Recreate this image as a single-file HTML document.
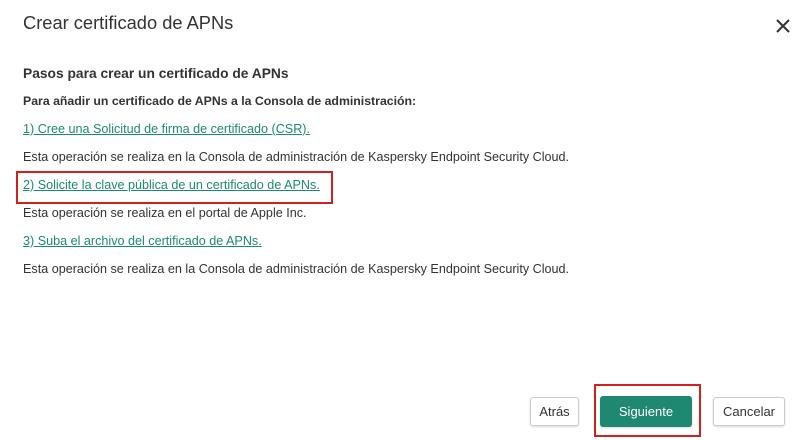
<!DOCTYPE html>
<html><head><meta charset="utf-8"><style>
body{margin:0;width:805px;height:440px;background:#fff;font-family:"Liberation Sans",sans-serif;color:#333;position:relative;overflow:hidden}
.a{position:absolute;white-space:nowrap}
.t{font-size:12.6px;line-height:16px}
.l{color:#1d8a72;text-decoration:underline}
.btn{position:absolute;box-sizing:border-box;border:1px solid #ccc;border-radius:3px;background:#fff;font-size:13px;text-align:center;line-height:27px;box-shadow:0 1px 2px rgba(0,0,0,.15)}
.red{position:absolute;border:2px solid #d41f1f;box-sizing:border-box}
</style></head><body>
<div class="a" style="left:23px;top:12px;font-size:18.3px;line-height:22px;color:#333">Crear certificado de APNs</div>
<svg class="a" style="left:775px;top:18px" width="16" height="16" viewBox="0 0 16 16"><path d="M2 2L14 14M14 2L2 14" stroke="#333" stroke-width="2"/></svg>
<div class="a" style="left:23px;top:65px;font-size:13.8px;font-weight:bold;line-height:18px">Pasos para crear un certificado de APNs</div>
<div class="a t" style="left:23px;top:93px;font-weight:bold;font-size:12.3px">Para añadir un certificado de APNs a la Consola de administración:</div>
<div class="a t l" style="left:23px;top:121px">1) Cree una Solicitud de firma de certificado (CSR).</div>
<div class="a t" style="left:23px;top:149px">Esta operación se realiza en la Consola de administración de Kaspersky Endpoint Security Cloud.</div>
<div class="a t l" style="left:23px;top:177px">2) Solicite la clave pública de un certificado de APNs.</div>
<div class="red" style="left:16px;top:171px;width:317px;height:33px"></div>
<div class="a t" style="left:23px;top:205px">Esta operación se realiza en el portal de Apple Inc.</div>
<div class="a t l" style="left:23px;top:233px">3) Suba el archivo del certificado de APNs.</div>
<div class="a t" style="left:23px;top:261px">Esta operación se realiza en la Consola de administración de Kaspersky Endpoint Security Cloud.</div>
<div class="btn" style="left:530px;top:397px;width:49px;height:29px">Atrás</div>
<div class="btn" style="left:600px;top:396px;width:92px;height:31px;background:#1f8870;border-color:#1f8870;color:#fff;line-height:29px">Siguiente</div>
<div class="red" style="left:594px;top:384px;width:107px;height:53px"></div>
<div class="btn" style="left:713px;top:397px;width:72px;height:29px">Cancelar</div>
</body></html>
